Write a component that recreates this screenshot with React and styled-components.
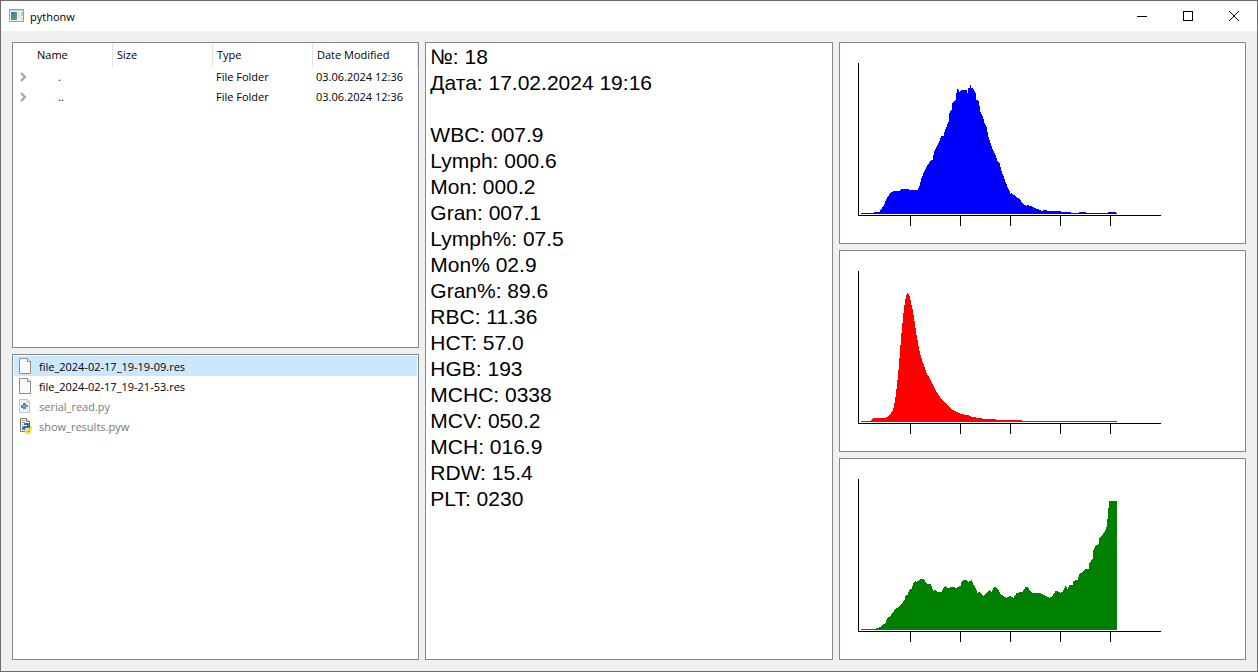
import { useState } from 'react'
import styled, { createGlobalStyle } from 'styled-components'

const GlobalStyle = createGlobalStyle`
  * {
    box-sizing: border-box;
  }
  body {
    margin: 0;
    background: #f0f0f0;
    color: black;
    font-family: 'Open Sans', 'Noto Sans', sans-serif;
    font-size: 11px;
  }
`
const Window = styled.div`
  display: flex;
  flex-direction: column;
  min-height: 100vh;
  border: 1px solid #6b6b6b;
`
const TitleBar = styled.header`
  display: flex;
  align-items: center;
  height: 30px;
  padding-left: 8px;
  background: white;
`
const Title = styled.h1`
  flex: 1;
  margin: 0 0 0 5px;
  font-size: 11px;
  font-weight: 400;
`
const WindowButton = styled.button`
  display: flex;
  align-items: center;
  justify-content: center;
  width: 46px;
  height: 30px;
  padding: 0;
  border: none;
  background: white;
  &:hover {
    background: #e5e5e5;
  }
`
const Content = styled.main`
  flex: 1;
  display: grid;
  grid-template-columns: repeat(3, minmax(0, 1fr));
  gap: 6px;
  padding: 11px;
`
const Column = styled.div`
  display: grid;
  grid-auto-rows: minmax(0, 1fr);
  gap: 6px;
`
const Panel = styled.section`
  overflow: hidden;
  border: 1px solid #828790;
  background: white;
`
const FolderTable = styled.table`
  width: 100%;
  table-layout: fixed;
  border-collapse: separate;
  border-spacing: 0;
  line-height: 20px;
  white-space: nowrap;
`
const HeadCell = styled.th`
  width: ${({ $last }) => ($last ? 'auto' : '100px')};
  height: 24px;
  padding: 0 0 0 ${({ $first }) => ($first ? '24px' : '4px')};
  border-right: 1px solid #e5e5e5;
  font-weight: 400;
  text-align: left;
`
const Cell = styled.td`
  height: 20px;
  padding: 0 0 0 3px;
`
const FolderName = styled.div`
  display: flex;
  align-items: center;
  gap: 30px;
  padding-left: 3px;
`
const FileList = styled.ul`
  margin: 0;
  padding: 1px;
  list-style: none;
`
const FileButton = styled.button`
  display: flex;
  align-items: center;
  gap: 6px;
  width: 100%;
  height: 20px;
  padding: 0 3px;
  border: none;
  background: ${({ $selected }) => ($selected ? '#cce8ff' : 'white')};
  color: black;
  font: inherit;
  &:disabled {
    color: #787878;
  }
`
const Report = styled.textarea`
  display: block;
  width: 100%;
  padding: 1px 4px;
  border: 1px solid #828790;
  border-radius: 0;
  outline: none;
  resize: none;
  background: white;
  color: black;
  font-family: 'Liberation Sans', Arial, sans-serif;
  font-size: 21px;
  line-height: 26px;
`
const ChartPanel = styled(Panel)`
  padding: 20px 18px 0;
`
const Chart = styled.svg`
  display: block;
  shape-rendering: crispEdges;
`

const folders = [
  { name: '.', type: 'File Folder', date: '03.06.2024 12:36' },
  { name: '..', type: 'File Folder', date: '03.06.2024 12:36' },
]

const files = [
  { name: 'file_2024-02-17_19-19-09.res', kind: 'res' },
  { name: 'file_2024-02-17_19-21-53.res', kind: 'res' },
  { name: 'serial_read.py', kind: 'py' },
  { name: 'show_results.pyw', kind: 'pyw' },
]

const report = `№: 18
Дата: 17.02.2024 19:16

WBC: 007.9
Lymph: 000.6
Mon: 000.2
Gran: 007.1
Lymph%: 07.5
Mon% 02.9
Gran%: 89.6
RBC: 11.36
HCT: 57.0
HGB: 193
MCHC: 0338
MCV: 050.2
MCH: 016.9
RDW: 15.4
PLT: 0230`

// histogram knots: "channel,height"
const wbc =
  '3,1 15,1 16,2 21,2 23,5 25,8 26,10 28,15 30,18 32,21 35,23 41,23 43,25 49,25 52,24 59,24 61,28 63,36 66,43 69,49 72,53 74,54 76,63 78,67 81,73 83,78 85,78 87,85 90,92 91,101 93,104 94,111 97,114 98,121 99,125 101,122 103,124 108,124 109,121 110,126 111,126 112,129 113,126 115,125 117,121 118,114 120,113 122,102 124,98 126,91 128,87 130,77 132,71 134,65 137,59 139,53 141,51 143,43 146,35 149,27 151,23 152,20 153,21 154,20 158,17 161,15 163,12 165,10 168,8 170,9 171,8 175,7 178,5 182,4 183,3 186,4 188,4 189,3 202,3 203,2 212,2 213,1 220,1 221,2 227,2 228,1 249,1 250,2 257,2 258,1'
const rbc =
  '3,1 12,1 13,2 15,4 27,4 29,5 32,8 34,11 35,14 36,19 37,25 38,33 39,42 40,52 41,64 42,77 43,89 44,99 45,109 46,117 47,123 48,127 49,129 50,128 51,126 52,122 53,117 54,113 55,107 56,101 57,94 58,87 59,82 60,76 61,71 62,67 64,60 66,55 68,49 71,44 74,38 77,32 80,27 83,23 86,20 89,17 93,13 98,10 102,8 109,7 114,5 120,4 127,3 137,3 138,2 163,2 164,1 258,1'
const plt =
  '3,1 17,1 19,2 22,3 24,5 27,7 29,12 32,14 34,17 37,21 40,23 43,26 46,30 47,34 49,35 51,40 53,41 55,47 57,49 58,48 61,50 63,51 65,51 67,48 69,46 72,46 74,41 75,39 77,40 79,38 83,38 85,42 87,44 89,42 95,43 98,42 102,44 103,48 105,50 108,50 110,48 112,49 113,50 115,45 117,42 119,37 121,38 125,34 128,37 131,40 133,38 135,42 137,43 140,40 142,36 145,34 148,32 152,34 155,32 158,37 164,38 167,43 169,43 172,39 174,37 181,37 185,35 189,33 191,32 194,34 197,39 199,39 202,37 204,38 207,44 209,41 211,45 214,45 215,49 219,50 221,56 224,58 227,61 230,61 231,67 234,71 235,80 237,84 240,86 241,92 244,95 247,100 248,103 249,111 250,122 251,129 258,129'

const charts = [
  { label: 'WBC', color: '#0000ff', data: wbc },
  { label: 'RBC', color: '#ff0000', data: rbc },
  { label: 'PLT', color: '#008000', data: plt },
]

function histogramPath(data) {
  const knots = data.split(' ').map((knot) => knot.split(',').map(Number))
  let path = 'M3 151'
  let k = 0
  for (let x = 3; x <= 258; x++) {
    while (k < knots.length - 2 && knots[k + 1][0] <= x) k++
    const [x0, h0] = knots[k]
    const [x1, h1] = knots[k + 1]
    const height = Math.round(h0 + ((h1 - h0) * (x - x0)) / (x1 - x0))
    path += `V${151 - height}H${x + 1}`
  }
  return path + 'V151Z'
}

function Histogram({ label, color, data }) {
  return (
    <Chart width="303" height="163" role="img" aria-label={label}>
      <path d={histogramPath(data)} fill={color} />
      <path d="M0 0H1V152H303V153H0Z" />
      {[52, 102, 152, 202, 252].map((x) => (
        <rect key={x} x={x} y="153" width="1" height="10" />
      ))}
    </Chart>
  )
}

function AppIcon() {
  return (
    <svg width="16" height="14" viewBox="0 0 16 14">
      <defs>
        <linearGradient id="app" x1="0" y1="0" x2="1" y2="1">
          <stop offset="0" stopColor="#4a77a8" />
          <stop offset="1" stopColor="#55a878" />
        </linearGradient>
      </defs>
      <rect x="0.5" y="0.5" width="14" height="12" fill="#f4f4f4" stroke="#9b9fa3" />
      <path d="M1 1.5H14" stroke="#c9cdd1" />
      <rect x="2" y="3" width="6" height="8" fill="url(#app)" />
      <rect x="9" y="3" width="2" height="8" fill="#dfe5e8" />
      <rect x="12" y="3" width="2" height="4" fill="#a9cfc0" />
      <rect x="12" y="8" width="2" height="3" fill="#dcdfe1" />
    </svg>
  )
}

function Chevron() {
  return (
    <svg width="9" height="10" viewBox="0 0 9 10">
      <path d="M2 1L6 5L2 9" fill="none" stroke="#a0a0a0" strokeWidth="2" />
    </svg>
  )
}

function FileIcon({ kind }) {
  if (kind === 'res') {
    return (
      <svg width="16" height="16" viewBox="0 0 16 16">
        <path d="M2.5 0.5H10.5L13.5 3.5V15.5H2.5Z" fill="#f9f9f9" stroke="#8c8c8c" />
        <path d="M10.5 0.5V3.5H13.5" fill="white" stroke="#8c8c8c" />
      </svg>
    )
  }
  if (kind === 'py') {
    return (
      <svg width="16" height="16" viewBox="0 0 16 16">
        <path d="M2.5 1.5H10.5L12.5 3.5V14.5H2.5Z" fill="#f7f7f7" stroke="#c3c3c3" />
        <path d="M10 1.5V4H12.5" fill="none" stroke="#c3c3c3" />
        <path d="M6 5H9V7H11V9H9V11H6V10H4V7H6Z" fill="#4d8ab0" />
        <path d="M6 8.5H8.5V7" fill="none" stroke="#8fb8cf" />
      </svg>
    )
  }
  return (
    <svg width="16" height="16" viewBox="0 0 16 16">
      <path d="M3.5 0.5H9.5L12.5 3.5V13.5H3.5Z" fill="#f4f4f4" stroke="#777" />
      <path d="M5 2.5H8M5 4.5H8M5 6.5H6M5 11.5H6" stroke="#999" />
      <path d="M9.5 0.5V3.5H12.5" fill="white" stroke="#777" />
      <path d="M8 5H11Q13 5 13 6V9Q13 10 11 10H9Q8 10 8 12H7Q5 12 5 10Q5 8 7 8H10V7H7V6Q7 5 8 5Z" fill="#356fa5" />
      <path d="M13 8H14Q15 8 15 10Q15 13 14 13H11V14H14Q14 16 12 16H10Q8 16 8 14V12Q8 11 10 11H12Q13 11 13 9Z" fill="#ffd945" />
    </svg>
  )
}

function TitleButtons() {
  return (
    <>
      <WindowButton aria-label="Minimize">
        <svg width="10" height="10">
          <path d="M0 5.5H10" stroke="black" />
        </svg>
      </WindowButton>
      <WindowButton aria-label="Maximize">
        <svg width="10" height="10">
          <rect x="0.5" y="0.5" width="9" height="9" fill="none" stroke="black" />
        </svg>
      </WindowButton>
      <WindowButton aria-label="Close">
        <svg width="10" height="10">
          <path d="M0 0L10 10M10 0L0 10" stroke="black" />
        </svg>
      </WindowButton>
    </>
  )
}

function App() {
  const [selected, setSelected] = useState(files[0].name)

  return (
    <Window>
      <GlobalStyle />
      <TitleBar>
        <AppIcon />
        <Title>pythonw</Title>
        <TitleButtons />
      </TitleBar>
      <Content>
        <Column>
          <Panel>
            <FolderTable>
              <thead>
                <tr>
                  <HeadCell $first>Name</HeadCell>
                  <HeadCell>Size</HeadCell>
                  <HeadCell>Type</HeadCell>
                  <HeadCell $last>Date Modified</HeadCell>
                </tr>
              </thead>
              <tbody>
                {folders.map(({ name, type, date }) => (
                  <tr key={name}>
                    <Cell>
                      <FolderName>
                        <Chevron />
                        {name}
                      </FolderName>
                    </Cell>
                    <Cell />
                    <Cell>{type}</Cell>
                    <Cell>{date}</Cell>
                  </tr>
                ))}
              </tbody>
            </FolderTable>
          </Panel>
          <Panel>
            <FileList>
              {files.map(({ name, kind }) => (
                <li key={name}>
                  <FileButton
                    $selected={name === selected}
                    disabled={kind !== 'res'}
                    onClick={() => setSelected(name)}
                  >
                    <FileIcon kind={kind} />
                    {name}
                  </FileButton>
                </li>
              ))}
            </FileList>
          </Panel>
        </Column>
        <Report aria-label="Results" readOnly spellCheck={false} value={report} />
        <Column>
          {charts.map((chart) => (
            <ChartPanel key={chart.label}>
              <Histogram {...chart} />
            </ChartPanel>
          ))}
        </Column>
      </Content>
    </Window>
  )
}

export default App
